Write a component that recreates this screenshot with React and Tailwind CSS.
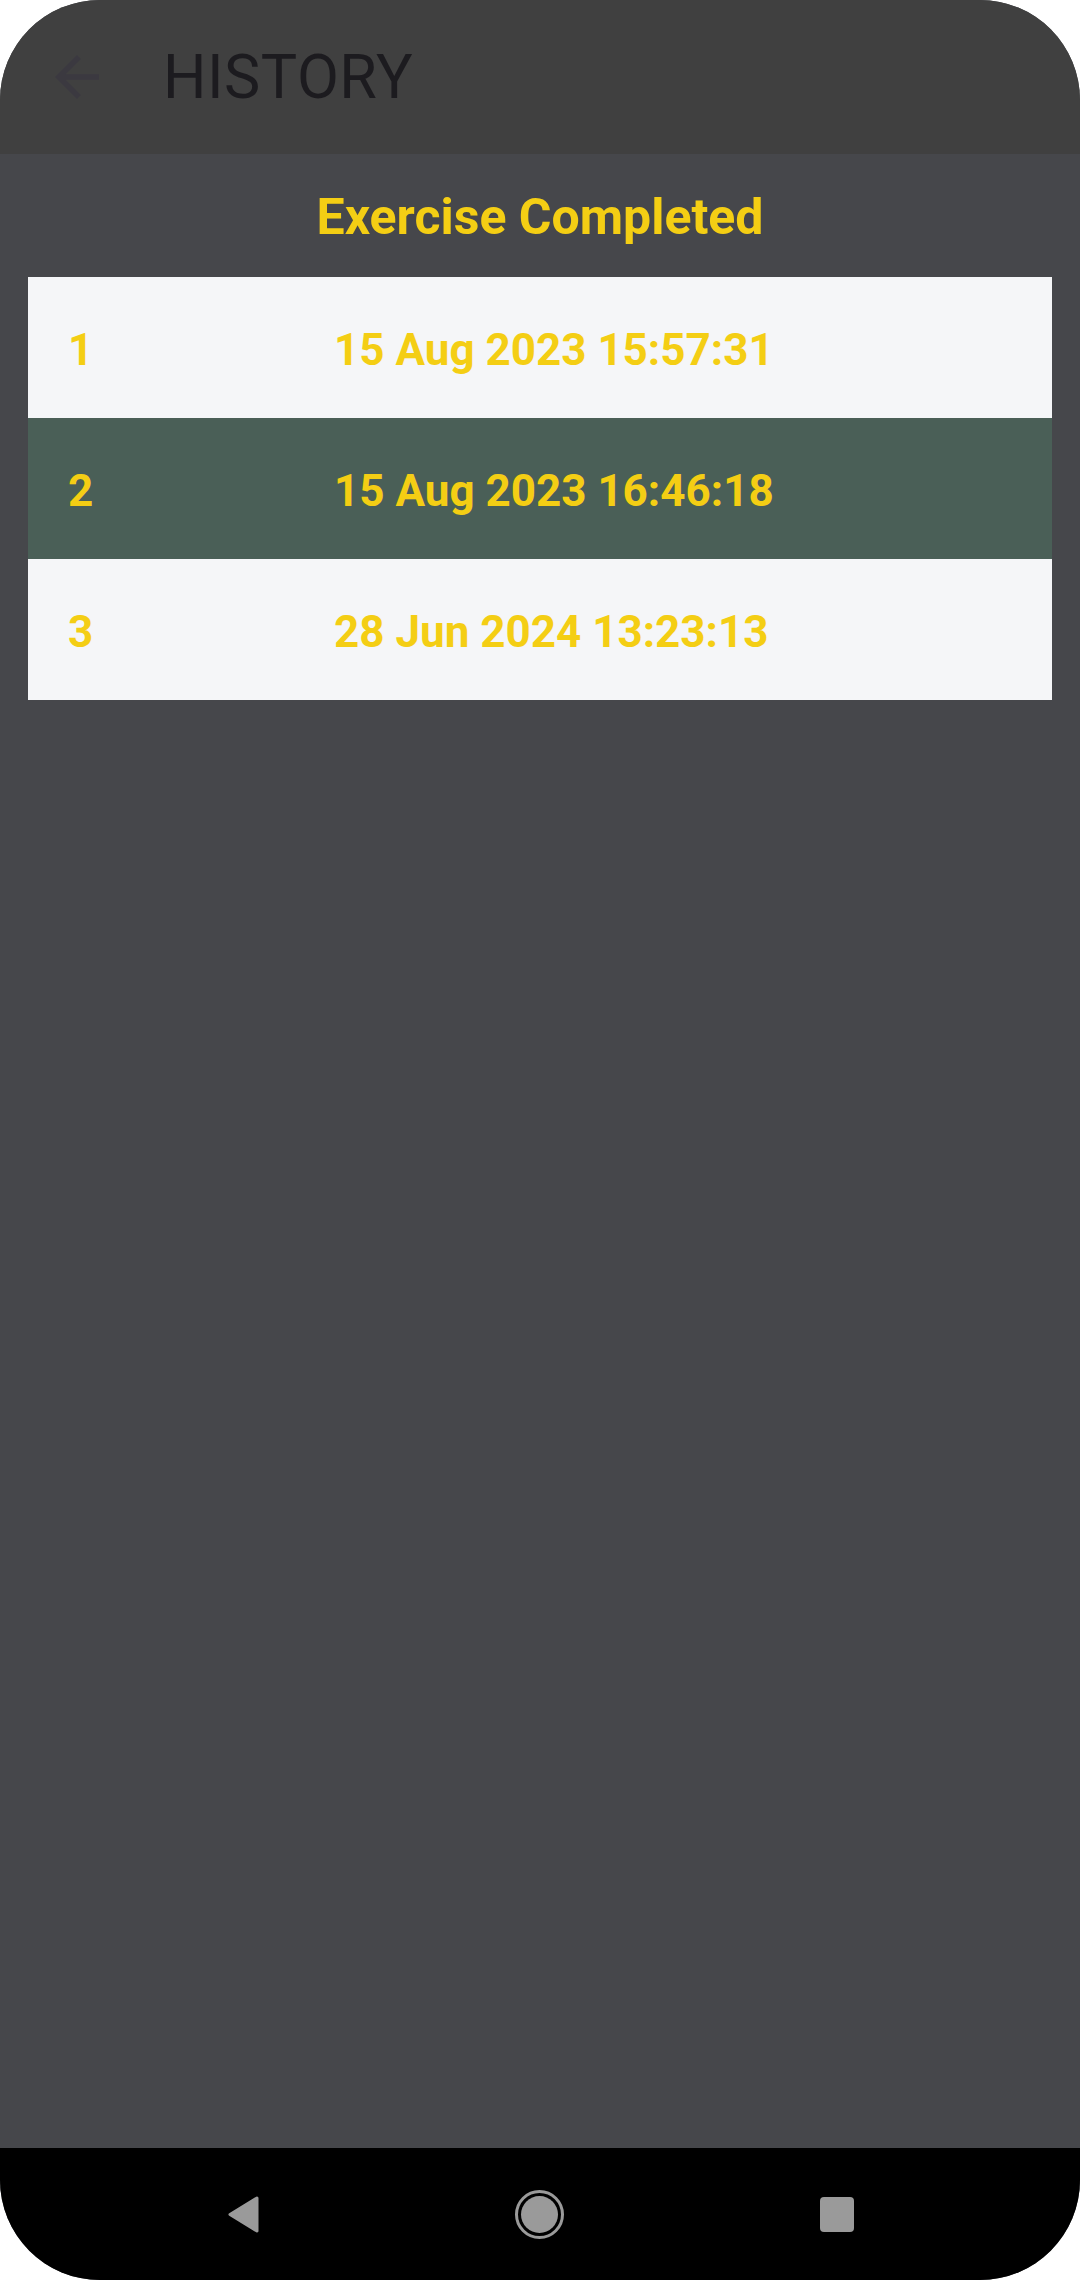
const rows = [
  { id: 1, date: "15 Aug 2023 15:57:31" },
  { id: 2, date: "15 Aug 2023 16:46:18" },
  { id: 3, date: "28 Jun 2024 13:23:13" },
];

const font = { fontFamily: "Roboto, 'Noto Sans', sans-serif" };

const App = () => {
  return (
    <div className="w-[1080px] h-[2280px] bg-white" style={font}>
      <div className="w-full h-full rounded-[100px] overflow-hidden flex flex-col bg-[#46474b]">
        {/* toolbar */}
        <div className="h-[154px] bg-[#404040] flex items-center pl-[44px]">
          <svg width="66" height="66" viewBox="0 0 24 24" fill="#3b3940">
            <path d="M20 11H7.83l5.59-5.59L12 4l-8 8 8 8 1.41-1.41L7.83 13H20v-2z" />
          </svg>
          <span className="ml-[53px] text-[61px] leading-none text-[#1c1b1f] tracking-[0.5px]">HISTORY</span>
        </div>

        <div className="flex-1 flex flex-col">
          <div className="h-[123px] flex items-center justify-center pt-[3px]">
            <span className="text-[50px] font-bold leading-none text-[#f4ce14]">Exercise Completed</span>
          </div>

          <div className="mx-[28px] flex flex-col">
            {rows.map((row) => (
              <div
                key={row.id}
                className={`h-[141px] grid grid-cols-[266px_1fr] items-center pl-[40px] pt-[5px] text-[44px] font-bold text-[#f4ce14] ${
                  row.id % 2 === 0 ? "bg-[#4a5f57]" : "bg-[#f5f6f8]"
                }`}
              >
                <span>{row.id}</span>
                <span>{row.date}</span>
              </div>
            ))}
          </div>
        </div>

        {/* system nav bar */}
        <div className="h-[132px] bg-black flex items-center justify-center gap-[256px]">
          <svg width="32" height="37" viewBox="0 0 32 37">
            <path d="M30 2 L3 18.5 L30 35 Z" fill="#9a9a9a" stroke="#9a9a9a" strokeWidth="3" strokeLinejoin="round" />
          </svg>
          <div className="w-[49px] h-[49px] rounded-full border-[3px] border-[#9a9a9a] flex items-center justify-center">
            <div className="w-[37px] h-[37px] rounded-full bg-[#9a9a9a]" />
          </div>
          <div className="w-[34px] h-[35px] rounded-[4px] bg-[#9a9a9a]" />
        </div>
      </div>
    </div>
  );
};

export default App;
